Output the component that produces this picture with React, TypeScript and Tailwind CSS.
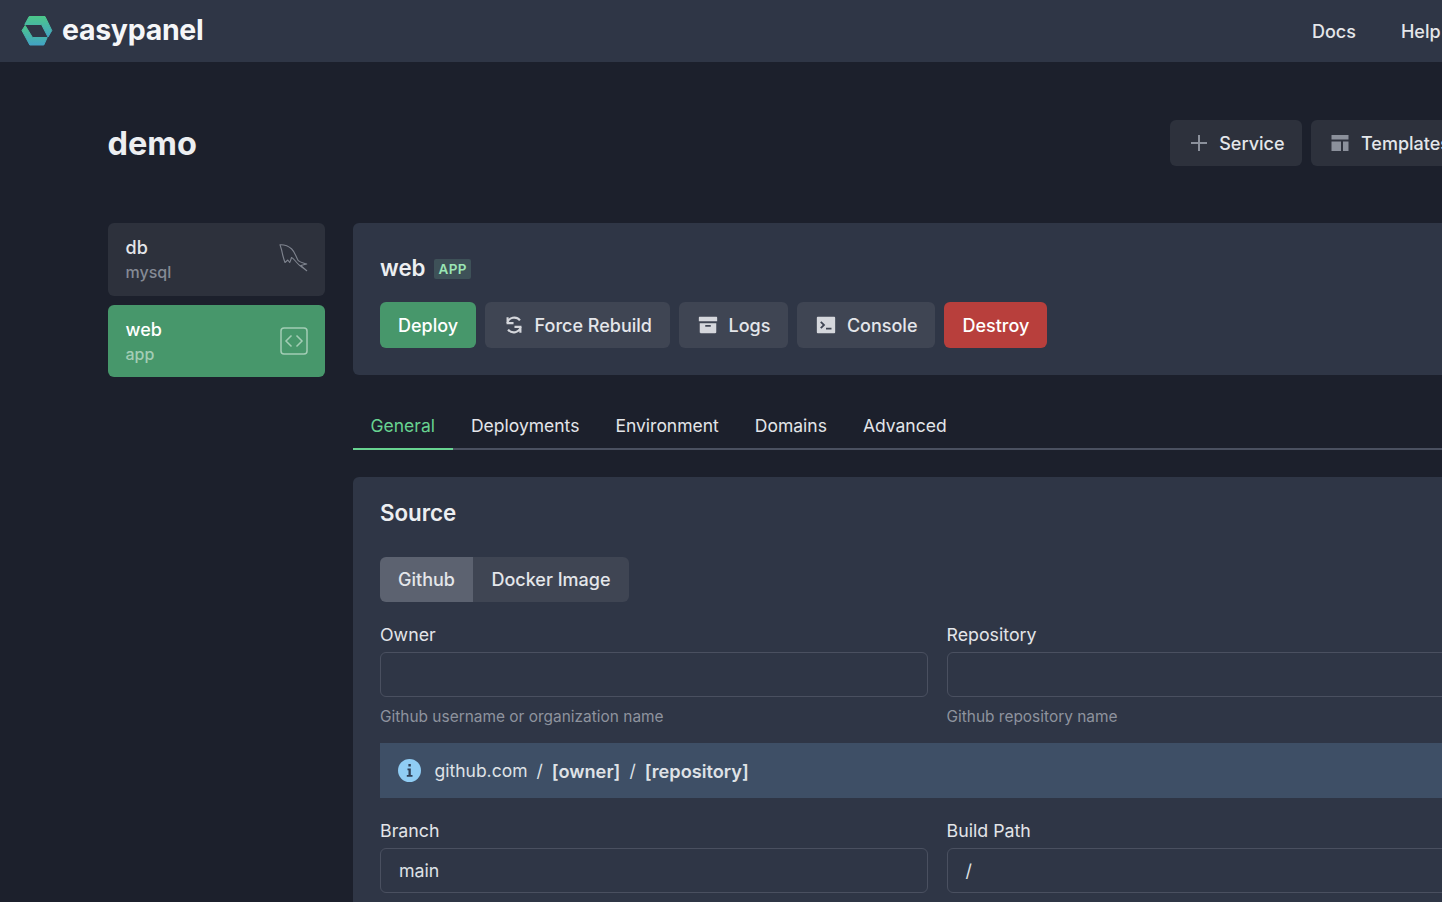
import React from "react";

function Logo() {
  return (
    <svg width="32" height="32" viewBox="0 0 32 32" className="shrink-0">
      <defs>
        <linearGradient id="lg" x1="0" y1="0" x2="0" y2="1">
          <stop offset="0" stopColor="#4cc78a" />
          <stop offset="1" stopColor="#42a3c4" />
        </linearGradient>
      </defs>
      <g fill="url(#lg)" stroke="url(#lg)" strokeWidth="1" strokeLinejoin="round">
        <path d="M8.2 1.5H24L30.8 15.5L27 22L20.5 9.5H3.8Z" />
        <path d="M1 15.5L4.2 10.5L11.5 22.5H26.2L22.8 30H8.8Z" />
      </g>
    </svg>
  );
}

function Dolphin() {
  return (
    <svg width="30" height="30" viewBox="-1 0 30 30" fill="none" stroke="#7f848f" strokeWidth="1.1" strokeLinejoin="round">
      <path d="M1 .7C5 .5 10 2.5 12.7 5C16 8 17 13 19.3 16.7C21 18.5 25 19 27.7 20L21.7 21.5L27.7 26.7C24 24 20 21.5 17.7 18.5C15.5 16 14 14 12.5 13.5C12 15 11.5 17 10.7 18.5L8.8 16L6 18.5C5 16 4.5 14 3.7 11C3 7 2 3.5 1 .7Z" />
    </svg>
  );
}

function Btn({ children, className = "" }: { children: React.ReactNode; className?: string }) {
  return (
    <div className={`h-[46px] flex items-center gap-[9.5px] rounded-md px-[18px] text-[18px] font-medium whitespace-nowrap shrink-0 ${className}`}>
      {children}
    </div>
  );
}

function Field({ label, value, help }: { label: string; value?: string; help?: string }) {
  return (
    <div className="flex flex-col">
      <div className="text-[17.8px] leading-[22px] text-[#e3e5e9] mb-[6.5px]">{label}</div>
      <div className="h-[45px] rounded-md border border-[#4a5060] px-[18px] pt-[2px] flex items-center text-[17.8px] text-[#dfe2e6]">{value}</div>
      {help && <div className="text-[15.45px] leading-[20px] text-[#8e939e] mt-[9.5px]">{help}</div>}
    </div>
  );
}

function Service({ name, type, icon, active }: { name: string; type: string; icon: React.ReactNode; active?: boolean }) {
  return (
    <div className={`h-[72.5px] rounded-md pl-[18px] pr-[17px] flex items-center justify-between ${active ? "bg-[#47976b]" : "bg-[#2d313c]"}`}>
      <div className="flex flex-col mt-[2px]">
        <span className={`text-[18px] leading-[24px] font-medium ${active ? "text-white" : "text-[#e4e6ea]"}`}>{name}</span>
        <span className={`text-[16px] leading-[24px] font-medium ${active ? "text-[#a3cdb5]" : "text-[#858a95]"}`}>{type}</span>
      </div>
      {icon}
    </div>
  );
}

function Tab({ label, active }: { label: string; active?: boolean }) {
  return (
    <div className={`px-[18px] h-[48px] pt-[2px] flex items-center border-b-2 ${active ? "text-[#68d391] border-[#68d391]" : "border-transparent"}`}>
      {label}
    </div>
  );
}

export default function App() {
  return (
    <div className="w-[1442px] h-[902px] overflow-hidden bg-[#1c202c] text-white font-['Inter',sans-serif]">
      <header className="h-[62px] bg-[#2f3646] flex items-center justify-between pl-[21px]">
        <div className="flex items-center gap-[9px]">
          <Logo />
          <span className="text-[28.5px] leading-[32px] -mt-[3px] font-bold tracking-[-0.3px] text-[#f5f6f8]">easypanel</span>
        </div>
        <nav className="flex items-center gap-[45px] text-[18px] font-medium text-[#e4e6ea] w-[130px] shrink-0">
          <span>Docs</span>
          <span>Help</span>
        </nav>
      </header>

      <div className="w-[1600px] pl-[107.5px] pt-[58px]">
        <div className="flex items-center justify-between w-[1360.5px] h-[46px]">
          <h1 className="text-[32.5px] mt-[2px] font-bold text-[#eceef1]">demo</h1>
          <div className="flex gap-[9px]">
            <Btn className="bg-[#2d313c] text-[#e4e6ea]">
              <svg width="22" height="22" viewBox="0 0 22 22" stroke="#8b909b" strokeWidth="2"><path d="M11 3V19M3 11H19" /></svg>
              Service
            </Btn>
            <Btn className="bg-[#2d313c] text-[#e4e6ea]">
              <svg width="22" height="22" viewBox="0 0 22 22" fill="#8b909b"><path d="M2.5 3H19.5V7.5H2.5ZM2.5 9.5H12V19H2.5ZM14 9.5H19.5V19H14Z" /></svg>
              Templates
            </Btn>
          </div>
        </div>

        <div className="flex gap-[27.5px] mt-[57px]">
          <aside className="w-[217.5px] shrink-0 flex flex-col gap-[9px]">
            <Service name="db" type="mysql" icon={<Dolphin />} />
            <Service
              name="web"
              type="app"
              active
              icon={
                <svg width="28" height="28" viewBox="0 0 28 28" fill="none" stroke="#a3cdb5" strokeWidth="1.5">
                  <rect x="1" y="1" width="26" height="26" rx="3" />
                  <path d="M11.5 8.5L6 14L11.5 19.5M16.5 8.5L22 14L16.5 19.5" />
                </svg>
              }
            />
          </aside>

          <main className="w-[1169px] shrink-0">
            <section className="h-[152px] rounded-md bg-[#2f3646] px-[27.5px] pt-[29px]">
              <div className="flex items-center gap-[9px] h-[33px]">
                <span className="text-[22.3px] -mt-[2px] font-semibold text-[#eceef1]">web</span>
                <span className="h-[20px] px-[4px] pt-[1px] rounded-[2px] bg-[#3e5158] text-[#9ae6b4] text-[13.5px] font-semibold tracking-[0.4px] flex items-center">APP</span>
              </div>
              <div className="flex gap-[9px] mt-[17px]">
                <Btn className="bg-[#47976b] text-white">Deploy</Btn>
                <Btn className="bg-[#3f4553] text-[#e4e6ea]">
                  <svg width="22" height="22" viewBox="0 0 24 24" fill="none" stroke="#d5d7dc" strokeWidth="2.3"><path d="M4.5 10A8 8 0 0 1 18.5 7M5 3.5V10H11.5M19.5 14A8 8 0 0 1 5.5 17M19 20.5V14H12.5" /></svg>
                  Force Rebuild
                </Btn>
                <Btn className="bg-[#3f4553] text-[#e4e6ea]">
                  <svg width="22" height="22" viewBox="0 0 24 24" fill="#d5d7dc"><path d="M3 10H21V20C21 20.55 20.55 21 20 21H4C3.45 21 3 20.55 3 20V10ZM9 12V14H15V12H9ZM2 4C2 3.45 2.45 3 3 3H21C21.55 3 22 3.45 22 4V8H2V4Z" /></svg>
                  Logs
                </Btn>
                <Btn className="bg-[#3f4553] text-[#e4e6ea]">
                  <svg width="22" height="22" viewBox="0 0 24 24" fill="#d5d7dc"><path d="M3 3H21A1 1 0 0 1 22 4V20A1 1 0 0 1 21 21H3A1 1 0 0 1 2 20V4A1 1 0 0 1 3 3ZM12 15V17H18V15H12ZM8.4 12L5.6 14.8 7 16.2 11.2 12 7 7.8 5.6 9.2 8.4 12Z" /></svg>
                  Console
                </Btn>
                <Btn className="bg-[#b83f3c] text-white">Destroy</Btn>
              </div>
            </section>

            <div className="flex mt-[27px] h-[48px] border-b-2 border-[#4a5060] text-[17.5px] text-[#e3e5e9]">
              <Tab label="General" active />
              <Tab label="Deployments" />
              <Tab label="Environment" />
              <Tab label="Domains" />
              <Tab label="Advanced" />
            </div>

            <section className="mt-[27px] rounded-md bg-[#2f3646] px-[27.5px] pt-[21px] pb-[40px]">
              <h2 className="text-[22.3px] leading-[30px] font-semibold text-[#eceef1]">Source</h2>
              <div className="flex mt-[28.5px] text-[18px] font-medium text-[#e4e6ea]">
                <div className="h-[45.5px] px-[18px] flex items-center bg-[#5c6270] rounded-l-md">Github</div>
                <div className="h-[45.5px] px-[18.5px] flex items-center bg-[#3f4553] rounded-r-md">Docker Image</div>
              </div>
              <div className="grid grid-cols-[548px_548px] gap-x-[18.5px] mt-[21.5px]">
                <Field label="Owner" help="Github username or organization name" />
                <Field label="Repository" help="Github repository name" />
              </div>
              <div className="h-[55px] mt-[16px] bg-[#3e4f66] flex items-center gap-[13.5px] pl-[18px] text-[17.5px] text-[#dfe2e6]">
                <svg width="23" height="23" viewBox="0 0 23 23" className="shrink-0">
                  <circle cx="11.5" cy="11.5" r="11.5" fill="#90cdf4" />
                  <path d="M9.5 9.5H12.8V16H14.5V17.8H8.8V16H10.5V11.3H9.5ZM10.4 5H12.8V7.6H10.4Z" fill="#2f3f55" />
                </svg>
                <div className="flex gap-[9px] pt-[3px]">
                  <span>github.com</span>
                  <span>/</span>
                  <span className="font-semibold text-[18.2px]">[owner]</span>
                  <span>/</span>
                  <span className="font-semibold text-[18.2px]">[repository]</span>
                </div>
              </div>
              <div className="grid grid-cols-[548px_548px] gap-x-[18.5px] mt-[22px]">
                <Field label="Branch" value="main" />
                <Field label="Build Path" value="/" />
              </div>
            </section>
          </main>
        </div>
      </div>
    </div>
  );
}
